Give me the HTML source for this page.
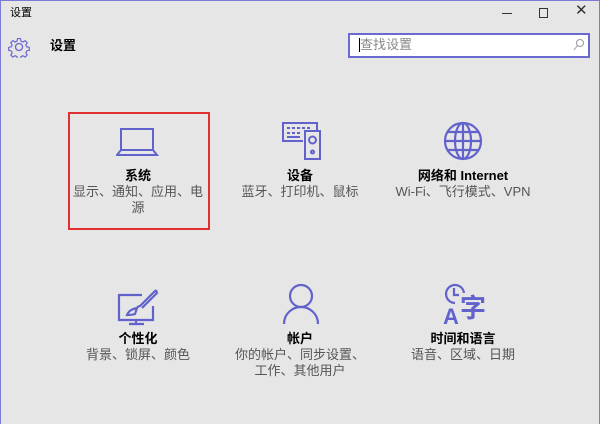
<!DOCTYPE html>
<html><head><meta charset="utf-8"><style>
*{margin:0;padding:0;box-sizing:border-box}
body{width:600px;height:424px;overflow:hidden;background:#e6e6e6;font-family:"Liberation Sans","Noto Sans CJK SC",sans-serif;position:relative}
.win{position:absolute;left:0;top:0;width:600px;height:424px;border:1px solid #7b7bd6;border-bottom:none}
.abs{position:absolute;line-height:16px}
.t{position:absolute;width:160px;text-align:center;font-size:13px;color:#000;font-weight:bold;line-height:16px}
.s{position:absolute;width:160px;text-align:center;font-size:13px;color:#555;line-height:16px}
svg{position:absolute}
</style></head><body>
<div class="win"></div>
<div class="abs" style="left:10px;top:5px;font-size:11px;color:#000">设置</div>
<div class="abs" style="left:502px;top:13px;width:10px;height:1px;background:#333"></div>
<div class="abs" style="left:539px;top:8px;width:9px;height:10px;border:1px solid #333"></div>
<div class="abs" style="left:575px;top:3px;font-size:15px;color:#333">✕</div>
<svg style="left:8px;top:36px" width="22" height="22" viewBox="0 0 20 20"><g fill="none" stroke="#6a6ad0" stroke-width="1.2"><circle cx="10" cy="10" r="3.2"/><path d="M8.5 1.5h3l.5 2.5 2 1 2.2-1.4 2.1 2.1-1.4 2.2 1 2 2.5.5v3l-2.5.5-1 2 1.4 2.2-2.1 2.1-2.2-1.4-2 1-.5 2.5h-3l-.5-2.5-2-1-2.2 1.4-2.1-2.1 1.4-2.2-1-2-2.5-.5v-3l2.5-.5 1-2-1.4-2.2 2.1-2.1 2.2 1.4 2-1z" transform="scale(.9) translate(1.1 1.1)"/></g></svg>
<div class="abs" style="left:50px;top:38px;font-size:13px;font-weight:bold">设置</div>
<div class="abs" style="left:348px;top:33px;width:242px;height:25px;background:#fff;border:2px solid #6a6ad0"></div>
<div class="abs" style="left:359px;top:38px;width:1px;height:14px;background:#000"></div>
<div class="abs" style="left:360px;top:37px;font-size:13px;color:#888">查找设置</div>
<svg style="left:573px;top:38px" width="12" height="14" viewBox="0 0 12 14"><g fill="none" stroke="#999"><circle cx="7" cy="5" r="3.5"/><path d="M4.5 7.5L1 12"/></g></svg>

<div class="abs" style="left:68px;top:112px;width:142px;height:118px;border:2px solid #e03030"></div>

<svg style="left:116px;top:126px" width="44" height="32" viewBox="0 0 44 32"><g fill="none" stroke="#6262cc" stroke-width="2"><rect x="5" y="3" width="32" height="21"/><path d="M5 24L1 29h40l-4-5"/></g></svg>
<div class="t" style="left:58px;top:168px">系统</div>
<div class="s" style="left:58px;top:184px">显示、通知、应用、电<br>源</div>

<svg style="left:281px;top:121px" width="42" height="40" viewBox="0 0 42 40"><g fill="none" stroke="#6262cc" stroke-width="2"><path d="M22 20H2V2h34v7"/><rect x="24" y="10" width="15" height="28"/><circle cx="31.5" cy="19" r="3.5"/><circle cx="31.5" cy="31" r="1.5"/></g><g fill="#6262cc"><rect x="6" y="6" width="3" height="2"/><rect x="11" y="6" width="3" height="2"/><rect x="16" y="6" width="3" height="2"/><rect x="21" y="6" width="3" height="2"/><rect x="26" y="6" width="3" height="2"/><rect x="6" y="11" width="3" height="2"/><rect x="11" y="11" width="3" height="2"/><rect x="16" y="11" width="3" height="2"/><rect x="6" y="15" width="13" height="2"/></g></svg>
<div class="t" style="left:220px;top:168px">设备</div>
<div class="s" style="left:220px;top:184px">蓝牙、打印机、鼠标</div>

<svg style="left:443px;top:121px" width="40" height="40" viewBox="0 0 40 40"><g fill="none" stroke="#6262cc" stroke-width="2.2"><circle cx="20" cy="20" r="18"/><ellipse cx="20" cy="20" rx="8" ry="18"/><path d="M2 20h36M5 11h30M5 29h30M20 2v36"/></g></svg>
<div class="t" style="left:383px;top:168px">网络和 Internet</div>
<div class="s" style="left:373px;top:184px;width:180px">Wi-Fi、飞行模式、VPN</div>

<svg style="left:116px;top:288px" width="44" height="38" viewBox="0 0 44 38"><g fill="none" stroke="#6262cc" stroke-width="2.2"><path d="M26 7H3v25h34V18"/><path d="M20 32v4M13 36h15"/><path d="M40 2L24 18l-3 1M40 2l1 3-15 15"/><path d="M11 27c2-5 6-6 10-7l-2 6c-3 1-6 1-8 1z"/></g></svg>
<div class="t" style="left:58px;top:331px">个性化</div>
<div class="s" style="left:58px;top:347px">背景、锁屏、颜色</div>

<svg style="left:282px;top:283px" width="38" height="42" viewBox="0 0 38 42"><g fill="none" stroke="#6262cc" stroke-width="2.2"><circle cx="19" cy="13" r="11"/><path d="M2 41c0-10 8-17 17-17s17 7 17 17"/></g></svg>
<div class="t" style="left:220px;top:331px">帐户</div>
<div class="s" style="left:220px;top:347px">你的帐户、同步设置、<br>工作、其他用户</div>

<svg style="left:443px;top:283px" width="46" height="42" viewBox="0 0 46 42"><g fill="none" stroke="#6262cc" stroke-width="2.2"><path d="M12 20A9 9 0 1 1 21 10"/><path d="M11 5v7h5"/></g><text x="0" y="41" font-family="Liberation Sans" font-size="22" font-weight="bold" fill="#6262cc">A</text><text x="17" y="34" font-family="Noto Sans CJK SC" font-size="26" font-weight="bold" fill="#6262cc">字</text></svg>
<div class="t" style="left:383px;top:331px">时间和语言</div>
<div class="s" style="left:383px;top:347px">语音、区域、日期</div>
</body></html>
